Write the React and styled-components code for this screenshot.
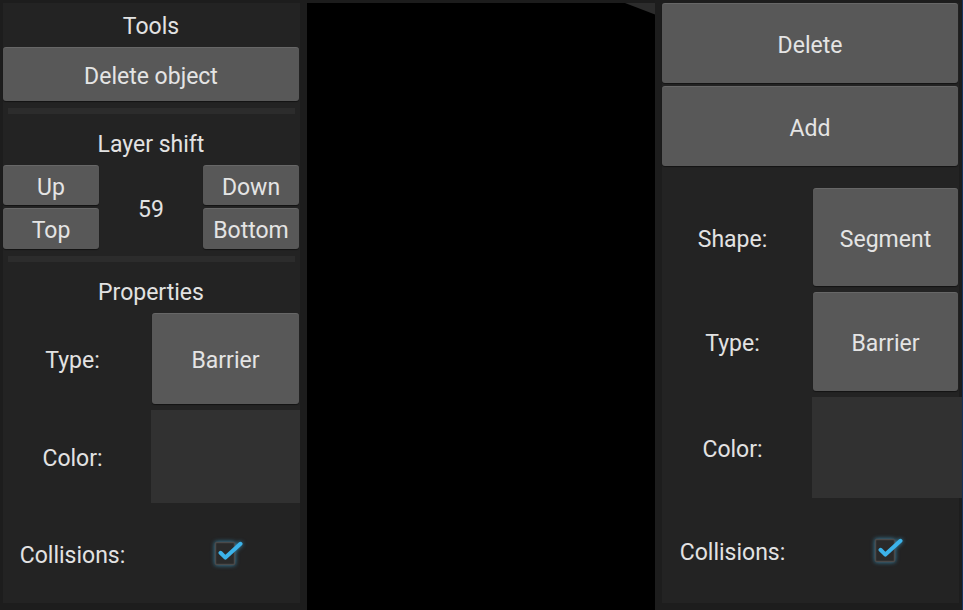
import React from "react"
import styled, {createGlobalStyle} from "styled-components"

const GlobalStyle = createGlobalStyle`
    html, body {
        margin: 0;
        padding: 0;
        background: #1c1c1c;
    }
    body {
        font-family: Roboto, "Noto Sans", sans-serif;
    }
`

function CheckBox({checked}) {
    return (
        <CheckSvg width="32" height="30" viewBox="0 0 32 30">
            <rect x="2.5" y="3.5" width="19" height="22" fill="#2a2a2a" stroke="#4a4a4a" strokeWidth="1.5" rx="1"/>
            {checked && (
                <path d="M7.5 13.8 L12.4 18.6 L27.5 4.8" fill="none" stroke="#3cb3ea" strokeWidth="4" strokeLinecap="round" strokeLinejoin="round"/>
            )}
        </CheckSvg>
    )
}

function PropertyRow({label, value, height, swatch, labelWidth, bleed}) {
    return (
        <PropRow height={height} labelWidth={labelWidth}>
            <Label>{label}</Label>
            {swatch ? <ColorBox bleed={bleed}/> : <Button>{value}</Button>}
        </PropRow>
    )
}

function CollisionsRow({labelWidth}) {
    return (
        <CollisionRow labelWidth={labelWidth}>
            <Label>Collisions:</Label>
            <CheckCell><CheckBox checked/></CheckCell>
        </CollisionRow>
    )
}

function App() {
    return (
        <>
        <GlobalStyle/>
        <Screen>
            <LeftDock>
                <Panel>
                    <Heading>Tools</Heading>
                    <Button height={54}>Delete object</Button>
                    <Separator/>
                    <Heading>Layer shift</Heading>
                    <LayerGrid>
                        <Button>Up</Button>
                        <LayerValue>59</LayerValue>
                        <Button>Down</Button>
                        <Button>Top</Button>
                        <Button>Bottom</Button>
                    </LayerGrid>
                    <Separator/>
                    <Heading>Properties</Heading>
                    <PropertyRow label="Type:" value="Barrier" height={91} labelWidth={139}/>
                    <Spacer size={6}/>
                    <PropertyRow label="Color:" swatch height={93} labelWidth={139} bleed={1}/>
                    <CollisionsRow labelWidth={139}/>
                </Panel>
            </LeftDock>
            <Canvas>
                <Wedge width="30" height="12" viewBox="0 0 30 12">
                    <polygon points="0,0 30,0 30,11.5" fill="#2c2c2c"/>
                </Wedge>
            </Canvas>
            <RightDock>
                <Panel>
                    <Button height={80}>Delete</Button>
                    <Spacer size={3}/>
                    <Button height={80}>Add</Button>
                    <Spacer size={22}/>
                    <PropertyRow label="Shape:" value="Segment" height={98} labelWidth={141}/>
                    <Spacer size={6}/>
                    <PropertyRow label="Type:" value="Barrier" height={99} labelWidth={141}/>
                    <Spacer size={6}/>
                    <PropertyRow label="Color:" swatch height={101} labelWidth={141} bleed={4}/>
                    <CollisionsRow labelWidth={141}/>
                </Panel>
            </RightDock>
        </Screen>
        </>
    )
}

export default App

const Screen = styled.div`
    display: flex;
    width: 963px;
    height: 610px;
    background: #1c1c1c;
    color: #e2e2e2;
    font-size: 23px;
    overflow: hidden;
`

const LeftDock = styled.div`
    width: 307px;
    padding: 3px 7px 7px 3px;
    box-sizing: border-box;
    display: flex;
    background: #1d1d1d;
`

const RightDock = styled.div`
    width: 308px;
    padding: 3px 3px 7px 7px;
    box-sizing: border-box;
    display: flex;
    background: #1d1d1d;
    border-right: 1px solid #16305a;
`

const Panel = styled.div`
    flex: 1;
    display: flex;
    flex-direction: column;
    background: #232323;
    padding-right: 1px;
`

const Canvas = styled.div`
    position: relative;
    flex: 1;
    margin-top: 3px;
    background: #000;
`

const Wedge = styled.svg`
    position: absolute;
    top: 0;
    right: 0;
    display: block;
`

const Heading = styled.div`
    height: 44px;
    box-sizing: border-box;
    padding-top: 2px;
    flex-shrink: 0;
    display: flex;
    align-items: center;
    justify-content: center;
`

const Button = styled.div`
    height: ${props => props.height ? props.height + "px" : "auto"};
    box-sizing: border-box;
    padding-top: 4px;
    flex-shrink: 0;
    display: flex;
    align-items: center;
    justify-content: center;
    background: #585858;
    border-radius: 3px;
    box-shadow: inset 0 1px 0 rgba(255, 255, 255, 0.09), 0 1px 1px rgba(0, 0, 0, 0.45);
    color: #e4e4e4;
    white-space: nowrap;
`

const Separator = styled.div`
    height: 6px;
    flex-shrink: 0;
    margin: 7px 4px 7px 5px;
    background: #2c2c2c;
`

const LayerGrid = styled.div`
    display: grid;
    grid-template-columns: 96px 1fr 96px;
    grid-template-rows: 40px 41px;
    row-gap: 3px;
    flex-shrink: 0;
`

const LayerValue = styled.div`
    grid-row: 1 / span 2;
    grid-column: 2;
    display: flex;
    align-items: center;
    justify-content: center;
    padding-top: 5px;
`

const PropRow = styled.div`
    display: grid;
    grid-template-columns: ${props => props.labelWidth}px 1fr;
    column-gap: 10px;
    height: ${props => props.height}px;
    flex-shrink: 0;
`

const Label = styled.div`
    display: flex;
    align-items: center;
    justify-content: center;
    padding-top: 4px;
    white-space: nowrap;
`

const ColorBox = styled.div`
    background: #313131;
    margin-left: -1px;
    margin-right: -${props => props.bleed || 0}px;
`

const Spacer = styled.div`
    height: ${props => props.size}px;
    flex-shrink: 0;
`

const CollisionRow = styled.div`
    flex: 1;
    display: grid;
    grid-template-columns: ${props => props.labelWidth}px 1fr;
    column-gap: 10px;
    align-items: center;
`

const CheckCell = styled.div`
    display: flex;
    justify-content: center;
    padding-left: 6px;
    padding-top: 1px;
`

const CheckSvg = styled.svg`
    display: block;
    overflow: visible;
    filter: drop-shadow(0 0 2px rgba(60, 179, 234, 0.7));
`
